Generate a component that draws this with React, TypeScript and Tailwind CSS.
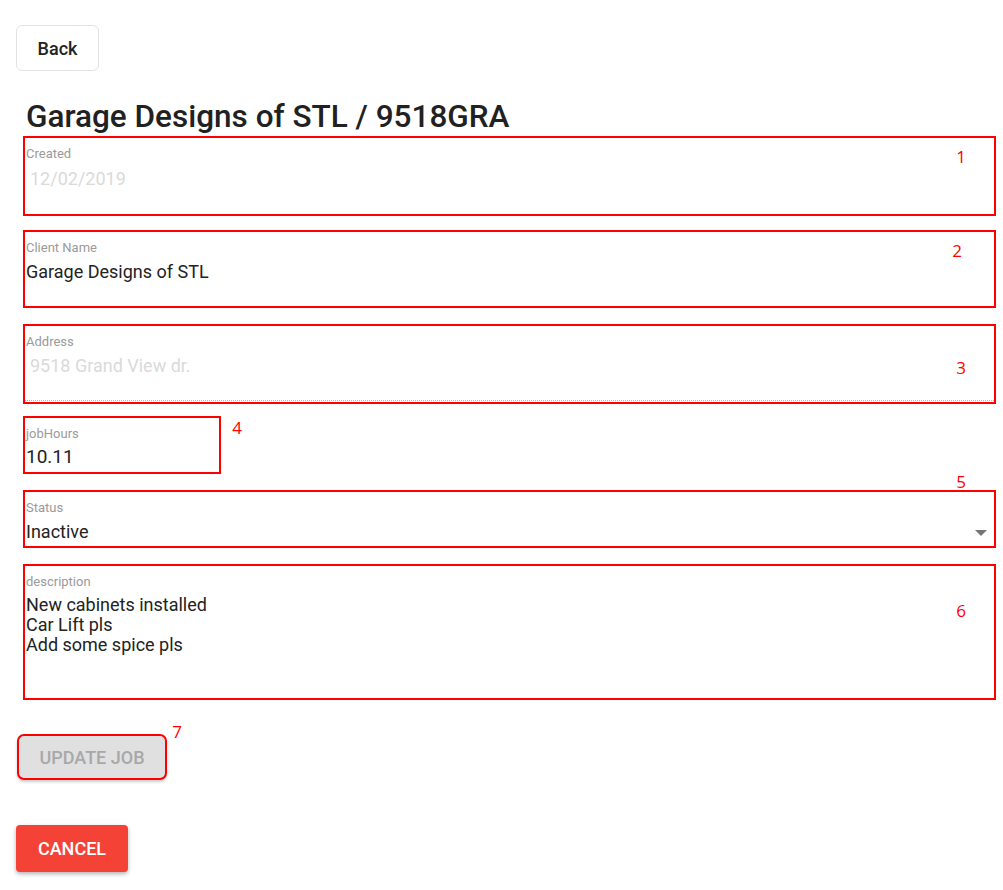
import React from 'react';

const Mark = ({ n, className }: { n: string; className: string }) => (
  <span className={`absolute text-[17px] leading-none text-[#ff0000] font-['Open_Sans',sans-serif] ${className}`}>{n}</span>
);

const Field = ({
  label,
  children,
  className = '',
  mark,
}: {
  label: string;
  children: React.ReactNode;
  className?: string;
  mark?: React.ReactNode;
}) => (
  <div className={`relative border-2 border-[#ff0000] pt-[8px] ${className}`}>
    <div className="pl-px text-[13px] leading-[15px] text-[#9a9a9a]">{label}</div>
    {children}
    {mark}
  </div>
);

export default function App() {
  return (
    <div className="min-h-screen bg-white pl-4 pt-[25px] font-['Roboto',sans-serif] text-[#222]">
      <button className="h-[46px] w-[83px] rounded-md border border-[#e3e3e3] bg-white text-[18px] font-medium text-[#222]">
        Back
      </button>

      <h1 className="mt-[29px] pl-[10px] text-[31.5px] font-medium leading-[34px] text-[#212121]">
        Garage Designs of STL / 9518GRA
      </h1>

      <div className="ml-[7px] mt-[2px] flex w-[973px] flex-col">
        <Field label="Created" className="h-[80px]" mark={<Mark n="1" className="right-[28px] top-[10px]" />}>
          <div className="mt-[7px] pl-[5px] text-[18px] leading-[21px] text-[#dadada]">12/02/2019</div>
        </Field>

        <Field label="Client Name" className="mt-[14px] h-[78px]" mark={<Mark n="2" className="right-[32px] top-[10px]" />}>
          <div className="mt-[6px] pl-px text-[18px] leading-[21px] text-[#222]">Garage Designs of STL</div>
        </Field>

        <Field label="Address" className="mt-[16px] h-[80px]" mark={<Mark n="3" className="right-[28px] top-[33px]" />}>
          <div className="mt-[6px] pl-[5px] text-[18px] leading-[21px] text-[#dadada]">9518 Grand View dr.</div>
          <div className="absolute bottom-[1px] left-0 right-0 border-b border-dotted border-[#b5b5b5]" />
        </Field>

        <Field label="jobHours" className="mt-[12px] h-[58px] w-[198px]" mark={<Mark n="4" className="-right-[23px] top-[1px]" />}>
          <div className="mt-[5px] pl-px text-[19px] leading-[22px] text-[#222]">10.11</div>
        </Field>

        <Field label="Status" className="mt-[16px] h-[58px]" mark={<Mark n="5" className="-top-[19px] right-[28px]" />}>
          <div className="mt-[6px] pl-px text-[18px] leading-[21px] text-[#222]">Inactive</div>
          <div className="absolute right-[7px] top-[38px] h-0 w-0 border-x-[6px] border-t-[6px] border-x-transparent border-t-[#757575]" />
        </Field>

        <Field label="description" className="mt-[16px] h-[136px]" mark={<Mark n="6" className="right-[28px] top-[36px]" />}>
          <div className="mt-[6px] pl-px text-[18px] leading-[20px] text-[#222]">
            <div>New cabinets installed</div>
            <div>Car Lift pls</div>
            <div>Add some spice pls</div>
          </div>
        </Field>
      </div>

      <div className="relative ml-px mt-[34px] w-[150px]">
        <button className="h-[46px] w-[150px] rounded-[7px] border-2 border-[#ff0000] bg-[#e0e0e0] text-[18px] font-medium text-[#a8a8a8] shadow-[0_2px_3px_rgba(0,0,0,0.2)]">
          UPDATE JOB
        </button>
        <Mark n="7" className="-right-[15px] -top-[11px]" />
      </div>

      <button className="mt-[45px] h-[47px] w-[112px] rounded-[4px] bg-[#f44336] text-[18px] font-medium text-white shadow-[0_2px_4px_rgba(0,0,0,0.3)]">
        CANCEL
      </button>
    </div>
  );
}
